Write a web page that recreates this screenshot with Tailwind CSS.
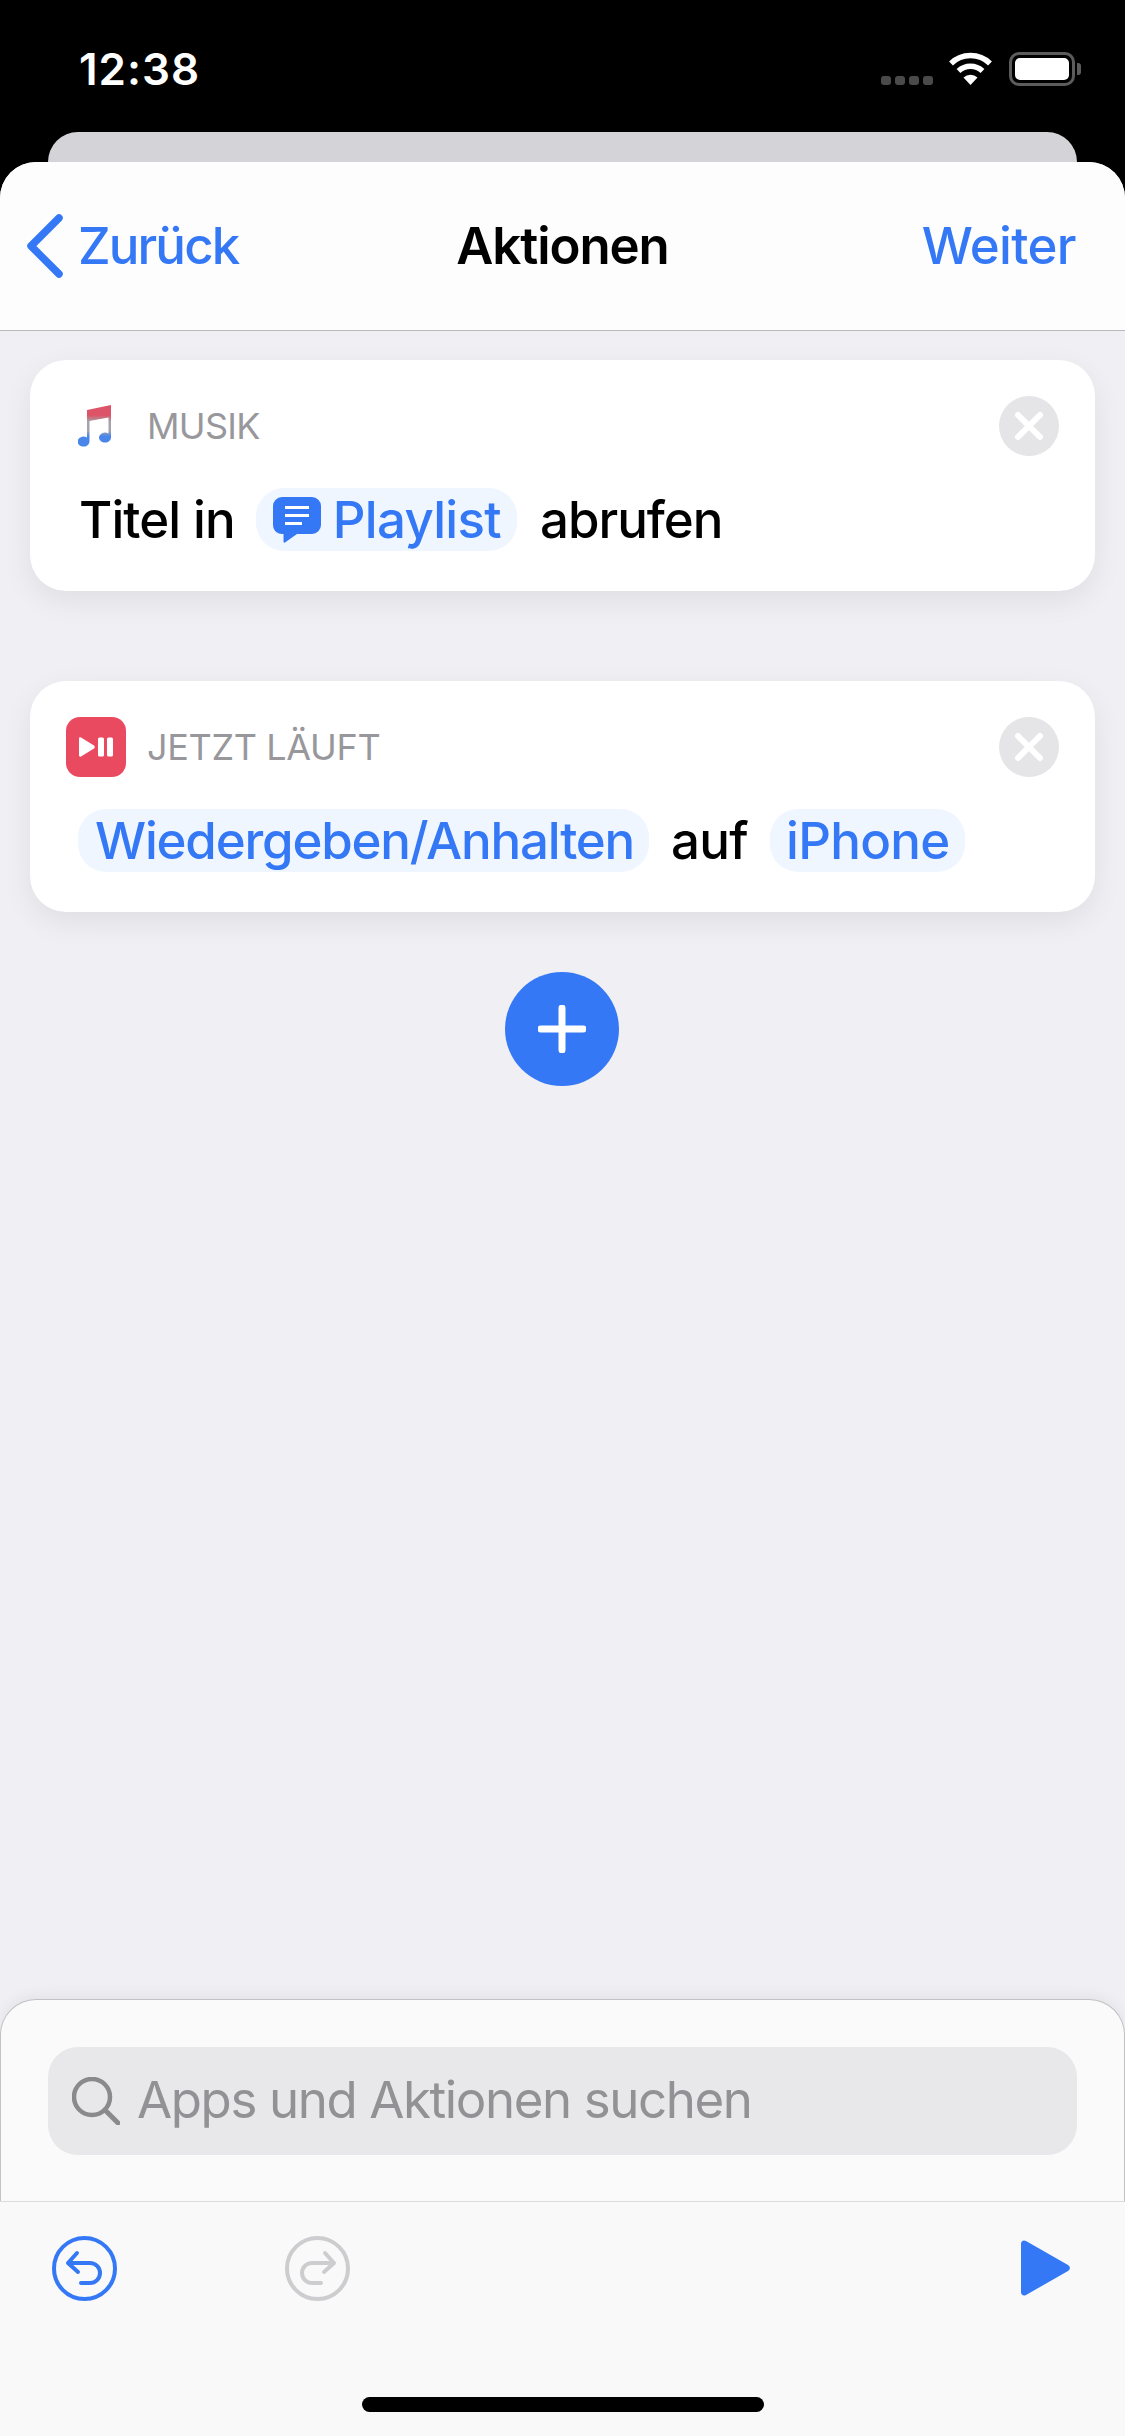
<!DOCTYPE html>
<html>
<head>
    <title>Aktionen</title>
    <script src="https://cdn.jsdelivr.net/npm/@tailwindcss/browser@4"></script>
</head>
<body class="bg-black">
    <div class="w-[1125px] h-[2436px] flex flex-col bg-black overflow-hidden font-['Inter',sans-serif]">
        <!-- status bar -->
        <div class="h-[132px] flex items-start justify-between pt-[45px] pl-[79px] pr-[44px] text-white">
            <span class="text-[44px] leading-[48px] font-semibold tracking-[1px]">12:38</span>
            <div class="flex items-start pt-[7px]">
                <div class="flex gap-[4px] mt-[24px] mr-[15px]">
                    <span class="w-[10px] h-[9px] rounded-[3px] bg-[#4a4a4a]"></span>
                    <span class="w-[10px] h-[9px] rounded-[3px] bg-[#4a4a4a]"></span>
                    <span class="w-[10px] h-[9px] rounded-[3px] bg-[#4a4a4a]"></span>
                    <span class="w-[10px] h-[9px] rounded-[3px] bg-[#4a4a4a]"></span>
                </div>
                <svg class="w-[45px] h-[33px] mr-[16px]" viewBox="0 0 45 33" fill="none">
                    <path d="M3 11.5A28 28 0 0 1 42 11.5" stroke="white" stroke-width="5.5"/>
                    <path d="M10.5 19A17.5 17.5 0 0 1 34.5 19" stroke="white" stroke-width="5.5"/>
                    <path d="M15.5 25.5A10.5 10.5 0 0 1 29.5 25.5L22.5 33Z" fill="white"/>
                </svg>
                <div class="w-[66px] h-[34px] rounded-[10px] border-[3px] border-[#5c5c5c] p-[3px]">
                    <div class="w-full h-full rounded-[5px] bg-white"></div>
                </div>
                <div class="w-[4px] h-[12px] mt-[11px] ml-[2px] rounded-r-[3px] bg-[#5c5c5c]"></div>
            </div>
        </div>

        <!-- sheet behind -->
        <div class="h-[30px] mx-[48px] rounded-t-[30px] bg-[#d4d4d8] shrink-0"></div>

        <!-- front sheet -->
        <div class="flex-1 flex flex-col rounded-t-[36px] overflow-hidden bg-[#efeff4]">
            <div class="h-[169px] shrink-0 grid grid-cols-3 items-center bg-[#fdfdfd] border-b border-[#b9b9bc] text-[51px] leading-[60px]">
                <div class="flex items-center text-[#3478f6] pl-[26px]">
                    <svg class="w-[38px] h-[64px] mr-[14px]" viewBox="0 0 38 64" fill="none">
                        <path d="M33 4L5 32L33 60" stroke="#3478f6" stroke-width="7.5" stroke-linecap="round" stroke-linejoin="round"/>
                    </svg>
                    <span class="tracking-[-1.9px] font-[450]">Zurück</span>
                </div>
                <div class="text-center font-semibold text-black tracking-[-1.1px]">Aktionen</div>
                <div class="text-right font-medium text-[#3478f6] pr-[49px] tracking-[-0.6px]">Weiter</div>
            </div>

            <div class="flex-1 flex flex-col items-center px-[30px] pt-[29px]">
                <!-- Musik card -->
                <div class="w-full h-[231px] rounded-[36px] bg-white shadow-[0_10px_30px_rgba(0,0,0,0.07)] pt-[36px] pl-[36px] pr-[36px]">
                    <div class="flex items-start justify-between">
                        <div class="flex items-center h-[60px]">
                            <div class="w-[60px] h-[60px] flex items-center pl-[12px]">
                                <svg class="w-[33px] h-[42px]" viewBox="0 0 33 42" fill="none">
                                    <defs>
                                        <linearGradient id="note" x1="0" y1="0" x2="0" y2="1">
                                            <stop offset="0.25" stop-color="#dd5468"/>
                                            <stop offset="0.4" stop-color="#a4a4aa"/>
                                            <stop offset="0.62" stop-color="#a4a4aa"/>
                                            <stop offset="0.75" stop-color="#4a86ea"/>
                                        </linearGradient>
                                    </defs>
                                    <path d="M9 5L33 0V33A6 5 0 1 1 30.500 28.500V12.500L11.500 16V37A6 5 0 1 1 9 32.500Z" fill="url(#note)"/>
                                </svg>
                            </div>
                            <span class="ml-[21px] text-[36px] leading-[44px] text-[#98989c] tracking-[-0.7px]">MUSIK</span>
                        </div>
                        <div class="w-[60px] h-[60px] rounded-full bg-[#e5e5e7] flex items-center justify-center">
                            <svg class="w-[30px] h-[30px]" viewBox="0 0 30 30" fill="none">
                                <path d="M4 4L26 26M26 4L4 26" stroke="white" stroke-width="6" stroke-linecap="round"/>
                            </svg>
                        </div>
                    </div>
                    <div class="flex items-center h-[63px] mt-[32px] pl-[13px] text-[51px] leading-[60px] tracking-[-0.7px] font-[450]">
                        <span class="text-black tracking-[-0.9px]">Titel in</span>
                        <span class="ml-[21px] h-[63px] flex items-center rounded-[28px] bg-[#f0f6ff] pl-[17px] pr-[16px] text-[#3478f6]">
                            <svg class="w-[48px] h-[46px] mr-[12px]" viewBox="0 0 48 46" fill="none">
                                <path d="M9 0H39A9 9 0 0 1 48 9V28A9 9 0 0 1 39 37H24L12 45.5C11 46 10.500 45.500 10.500 44.500V36.900A9 9 0 0 1 0 28V9A9 9 0 0 1 9 0Z" fill="#3478f6"/>
                                <path d="M12 10.500H36M12 18.500H36M12 26.500H29" stroke="white" stroke-width="3"/>
                            </svg>
                            Playlist
                        </span>
                        <span class="ml-[23px] text-black tracking-[-1px]">abrufen</span>
                    </div>
                </div>

                <!-- Jetzt laeuft card -->
                <div class="w-full h-[231px] mt-[90px] rounded-[36px] bg-white shadow-[0_10px_30px_rgba(0,0,0,0.07)] pt-[36px] pl-[36px] pr-[36px]">
                    <div class="flex items-start justify-between">
                        <div class="flex items-center h-[60px]">
                            <div class="w-[60px] h-[60px] rounded-[14px] bg-[#ea4a60] flex items-center justify-center">
                                <svg class="w-[34px] h-[20px]" viewBox="0 0 34 20" fill="white">
                                    <path d="M0 1.500C0 0.500 1 0 2 0.500L15 8.500C16 9.200 16 10.800 15 11.500L2 19.500C1 20 0 19.500 0 18.500Z"/>
                                    <rect x="19" y="0.500" width="6" height="19" rx="1.500"/>
                                    <rect x="28" y="0.500" width="6" height="19" rx="1.500"/>
                                </svg>
                            </div>
                            <span class="ml-[21px] text-[36px] leading-[44px] text-[#98989c] tracking-[-0.35px]">JETZT LÄUFT</span>
                        </div>
                        <div class="w-[60px] h-[60px] rounded-full bg-[#e5e5e7] flex items-center justify-center">
                            <svg class="w-[30px] h-[30px]" viewBox="0 0 30 30" fill="none">
                                <path d="M4 4L26 26M26 4L4 26" stroke="white" stroke-width="6" stroke-linecap="round"/>
                            </svg>
                        </div>
                    </div>
                    <div class="flex items-center h-[63px] mt-[32px] pl-[12px] text-[51px] leading-[60px] tracking-[-0.7px] font-[450]">
                        <span class="h-[63px] flex items-center rounded-[28px] bg-[#f0f6ff] pl-[17px] pr-[15px] text-[#3478f6] tracking-[-1.2px]">Wiedergeben/Anhalten</span>
                        <span class="ml-[22px] text-black">auf</span>
                        <span class="ml-[22px] h-[63px] flex items-center rounded-[28px] bg-[#f0f6ff] px-[16px] text-[#3478f6]">iPhone</span>
                    </div>
                </div>

                <!-- add button -->
                <div class="w-[114px] h-[114px] mt-[60px] mr-[1px] rounded-full bg-[#3478f6] flex items-center justify-center">
                    <svg class="w-[48px] h-[48px]" viewBox="0 0 48 48" fill="none">
                        <path d="M24 3V45M3 24H45" stroke="white" stroke-width="7" stroke-linecap="round"/>
                    </svg>
                </div>
            </div>

            <!-- search sheet -->
            <div class="h-[202px] shrink-0 rounded-t-[36px] bg-[#fafafa] border-x border-t border-[#c2c2c5] shadow-[0_-4px_14px_rgba(0,0,0,0.05)] px-[47px] pt-[47px]">
                <div class="h-[108px] rounded-[30px] bg-[#e8e8ea] flex items-center pl-[24px]">
                    <svg class="w-[48px] h-[48px] mr-[17px]" viewBox="0 0 48 48" fill="none">
                        <circle cx="20" cy="20" r="18" stroke="#8a8a8e" stroke-width="4.500"/>
                        <path d="M33 33L46 46" stroke="#8a8a8e" stroke-width="5" stroke-linecap="round"/>
                    </svg>
                    <span class="text-[51px] leading-[60px] mb-[2px] tracking-[-1.4px] text-[#919196]">Apps und Aktionen suchen</span>
                </div>
            </div>

            <!-- toolbar -->
            <div class="h-[235px] shrink-0 bg-[#f9f9fa] border-t border-[#dcdcde] flex flex-col">
                <div class="flex items-start pt-[34px] pl-[52px] pr-[55px]">
                    <svg class="w-[65px] h-[65px]" viewBox="0 0 65 65" fill="none" stroke="#3478f6" stroke-width="4" stroke-linecap="round" stroke-linejoin="round">
                        <circle cx="32.500" cy="32.500" r="30.500"/>
                        <path d="M25 17L16 27L26 36M16 27H38A10 10 0 0 1 38 47H29"/>
                    </svg>
                    <svg class="w-[65px] h-[65px] ml-[168px]" viewBox="0 0 65 65" fill="none" stroke="#cdcdcf" stroke-width="4" stroke-linecap="round" stroke-linejoin="round">
                        <circle cx="32.500" cy="32.500" r="30.500"/>
                        <path d="M40 17L49 27L39 36M49 27H27A10 10 0 0 0 27 47H36"/>
                    </svg>
                    <svg class="w-[49px] h-[56px] ml-auto mt-[4px]" viewBox="0 0 49 56" fill="#3478f6">
                        <path d="M0 4C0 1 2.500 -0.500 5 1L47 25C49.500 26.500 49.500 29.500 47 31L5 55C2.500 56.500 0 55 0 52Z"/>
                    </svg>
                </div>
                <div class="w-[402px] h-[15px] rounded-full bg-black mx-auto mt-[96px]"></div>
            </div>
        </div>
    </div>
</body>
</html>
